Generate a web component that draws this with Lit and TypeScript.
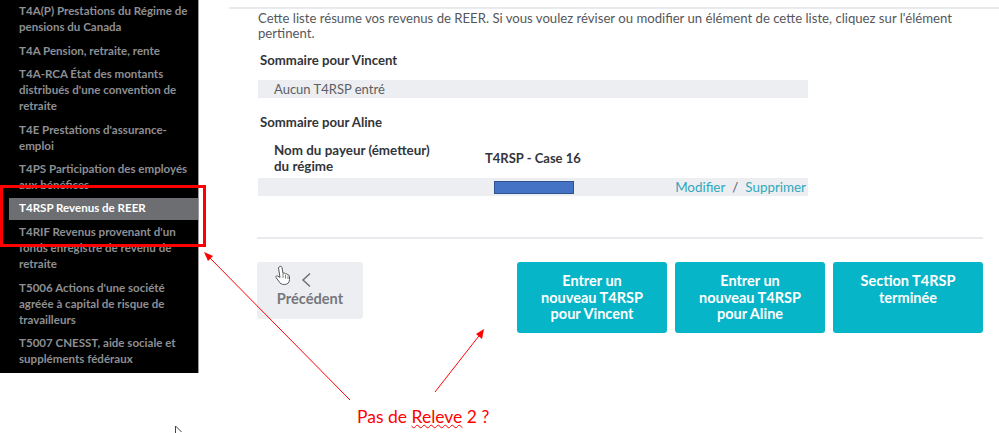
import { LitElement, html, css } from 'lit';
import { customElement } from 'lit/decorators.js';

const NAV_ITEMS = [
  "T4A(P) Prestations du Régime de pensions du Canada",
  'T4A Pension, retraite, rente',
  "T4A-RCA État des montants distribués d'une convention de retraite",
  "T4E Prestations d'assurance-emploi",
  'T4PS Participation des employés aux bénéfices',
  'T4RSP Revenus de REER',
  "T4RIF Revenus provenant d'un fonds enregistré de revenu de retraite",
  "T5006 Actions d'une société agréée à capital de risque de travailleurs",
  'T5007 CNESST, aide sociale et suppléments fédéraux',
];

const ACTIVE = 'T4RSP Revenus de REER';

@customElement('app-root')
export class AppRoot extends LitElement {
  static styles = css`
    :host {
      display: block;
      position: relative;
      width: 999px;
      height: 433px;
      overflow: hidden;
      background: #fff;
      font-family: Lato, 'Open Sans', sans-serif;
      color: #4a4c52;
    }

    .page {
      display: flex;
      align-items: flex-start;
    }

    .nav {
      width: 199px;
      height: 373px;
      box-sizing: border-box;
      flex: none;
      background: #000;
      padding-top: 3px;
      display: flex;
      flex-direction: column;
      gap: 7.5px;
      overflow: hidden;
      border-right: 1px solid #9a9a9a;
    }

    .nav-item {
      padding: 0 8px 0 19px;
      font-size: 11.55px;
      line-height: 16px;
      font-weight: 700;
      color: #8d8f94;
    }

    .nav-item.active {
      margin: -2.5px 0 -3.5px 9px;
      padding: 2px 0 4px 10px;
      background: #6d6e72;
      color: #fff;
    }

    .main {
      flex: 1;
      padding-top: 7px;
    }

    .top-rule {
      height: 2px;
      margin-left: 30px;
      background: #e9eaed;
    }

    .content {
      padding: 2px 16px 0 59px;
    }

    .intro {
      margin: 0;
      font-size: 13.15px;
      line-height: 15px;
      color: #55575c;
    }

    h3 {
      margin: 0;
      font-size: 13.2px;
      line-height: 16px;
      font-weight: 700;
      color: #33353a;
      padding-left: 2px;
    }

    .vincent {
      margin-top: 11px;
    }

    .bar {
      width: 550px;
      height: 18px;
      margin-top: 12px;
      background: #edeef1;
      box-sizing: border-box;
      font-size: 13px;
      line-height: 18px;
    }

    .empty {
      padding-left: 16px;
      color: #5c5e63;
    }

    .aline {
      margin-top: 16px;
    }

    .head-row {
      display: flex;
      align-items: center;
      margin-top: 12px;
      height: 32px;
      padding-left: 16px;
      font-size: 13.4px;
      line-height: 16px;
      font-weight: 700;
      color: #33353a;
    }

    .head-row .payer {
      width: 211px;
    }

    .head-row .case {
      font-size: 13px;
    }

    .data {
      position: relative;
      display: flex;
      justify-content: flex-end;
      gap: 7px;
      margin-top: 4px;
      padding-right: 2px;
      color: #2fa8bd;
      font-size: 13.4px;
    }

    .redact {
      position: absolute;
      left: 236px;
      top: 3px;
      width: 80px;
      height: 13px;
      box-sizing: border-box;
      background: #4472c4;
      border: 1px solid #2f528f;
    }

    .sep {
      color: #55575c;
    }

    .rule {
      height: 2px;
      margin: 41px 0 0 -1px;
      background: #e9eaed;
    }

    .actions {
      display: flex;
      align-items: flex-start;
      gap: 8px;
      margin: 23px 0 0 -1px;
    }

    .back {
      width: 106px;
      height: 57px;
      margin-right: 146px;
      padding-top: 10px;
      box-sizing: border-box;
      display: flex;
      flex-direction: column;
      align-items: center;
      background: #edeef1;
      border-radius: 3px;
      color: #75777c;
      font-size: 14.6px;
      line-height: 18px;
      font-weight: 700;
    }

    .back svg {
      display: block;
      margin: 0 8px 2px 0;
    }

    .cta {
      width: 150px;
      height: 71px;
      padding: 11px 4px 0;
      box-sizing: border-box;
      background: #06b5c8;
      border-radius: 3px;
      color: #fff;
      font-size: 14.5px;
      line-height: 16.7px;
      font-weight: 700;
      text-align: center;
    }

    .overlay {
      position: absolute;
      inset: 0;
      pointer-events: none;
    }

    .note {
      position: absolute;
      left: 357px;
      top: 406px;
      font-family: Lato, sans-serif;
      font-size: 17.5px;
      line-height: 22px;
      color: #f00;
      white-space: nowrap;
    }

    .note span {
      text-decoration: underline wavy #f00 1px;
    }
  `;

  render() {
    return html`
      <div class="page">
        <nav class="nav">
          ${NAV_ITEMS.map(
            (item) => html`<div class="nav-item ${item === ACTIVE ? 'active' : ''}">${item}</div>`,
          )}
        </nav>
        <main class="main">
          <div class="top-rule"></div>
          <div class="content">
            <p class="intro">
              Cette liste résume vos revenus de REER. Si vous voulez réviser ou modifier un élément de cette liste, cliquez sur l'élément pertinent.
            </p>
            <h3 class="vincent">Sommaire pour Vincent</h3>
            <div class="bar empty">Aucun T4RSP entré</div>
            <h3 class="aline">Sommaire pour Aline</h3>
            <div class="head-row">
              <div class="payer">Nom du payeur (émetteur)<br />du régime</div>
              <div class="case">T4RSP - Case 16</div>
            </div>
            <div class="bar data">
              <div class="redact"></div>
              <span>Modifier</span><span class="sep">/</span><span>Supprimer</span>
            </div>
            <div class="rule"></div>
            <div class="actions">
              <div class="back">
                <svg width="12" height="16" viewBox="0 0 12 16">
                  <path d="M10 1.500 3 8l7 6.500" fill="none" stroke="#6e7075" stroke-width="1.500" />
                </svg>
                Précédent
              </div>
              <div class="cta">Entrer un<br />nouveau T4RSP<br />pour Vincent</div>
              <div class="cta">Entrer un<br />nouveau T4RSP<br />pour Aline</div>
              <div class="cta">Section T4RSP<br />terminée</div>
            </div>
          </div>
        </main>
      </div>

      <svg class="overlay" width="999" height="433" viewBox="0 0 999 433">
        <rect x="1.500" y="186.500" width="203" height="59" fill="none" stroke="#f00" stroke-width="3" />
        <path d="M350 400 207 255" stroke="#f00" stroke-width="1" fill="none" />
        <path d="M204 252l9 4-5 5z" fill="#f00" />
        <path d="M435 392 482 332" stroke="#f00" stroke-width="1" fill="none" />
        <path d="M484 329l-2 10-6-5z" fill="#f00" />
        <path
          d="M279 267c1-1 2.500-1 3 .5l1 6c1-1 2-.5 2.500.5 1-.5 2-.2 2.300 1 1-.3 1.700 .5 1.700 1.500v3c0 3-2 5-5 5s-4.500-1-5.500-3l-3-4c-.5-1 .5-2 1.700-1.500l2.300 1.500-1.500-9.500z"
          fill="#fff"
          stroke="#55575c"
          stroke-width="1"
        />
        <path d="M283 274v4M285.500 275v3.500M288 276v3" stroke="#55575c" stroke-width="0.8" fill="none" />
        <path d="M175.500 426v7M175.500 426l6 6" stroke="#444" stroke-width="1" fill="none" />
      </svg>
      <div class="note">Pas de <span>Releve</span> 2 ?</div>
    `;
  }
}
